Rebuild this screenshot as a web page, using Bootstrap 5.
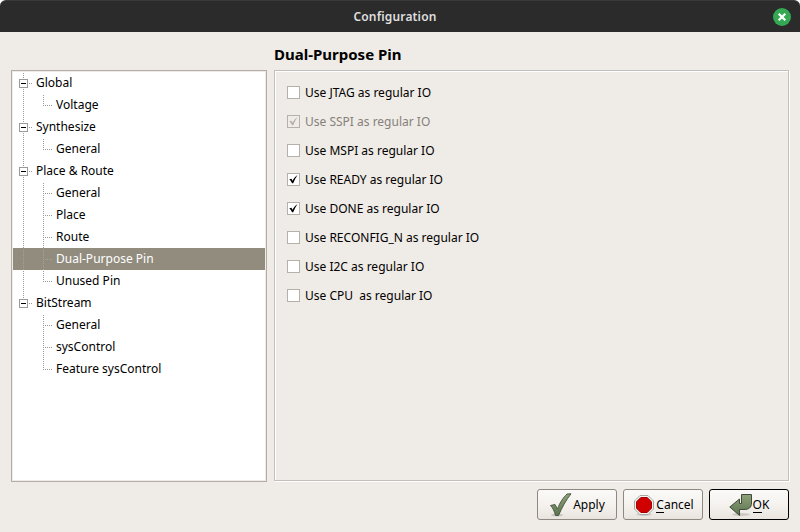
<!DOCTYPE html>
<html lang="en">
<head>
<meta charset="utf-8">
<title>Configuration</title>
<link href="https://cdn.jsdelivr.net/npm/bootstrap@5.3.0/dist/css/bootstrap.min.css" rel="stylesheet">
<style>
body{font:12px/22px "Noto Sans",sans-serif;color:#000;background:#fff}
.window{width:800px;height:532px;background:#efebe6}
.titlebar{height:32px;background:#2b2b2b;border-top:1px solid #3a3a3a;border-radius:6px 6px 0 0;color:#dfdfdf;padding-right:9px}
.titlewrap{background:#fff}
.titlebar .caption{padding-left:17px;font-weight:600;line-height:30px;letter-spacing:.15px}
.close-btn{width:18px;height:18px}
.content{height:500px;padding:0 11px 0 11px}
.tree{width:256px;height:412px;margin-top:38px;border:1px solid #b5ada5;background:#fff;box-shadow:inset 0 0 0 1px #efebe6;padding:1px}
.tree-row{height:22px}
.tree-row svg{width:43px;height:22px;flex:none}
.tree-row.root svg{width:23px}
.tree-row.selected{background:#918c7e;color:#fff}
.dots{stroke:#9a9a9a;stroke-dasharray:1 1;fill:none}
.selected .dots{stroke:#a5a196}
.page-title{height:38px;font-size:15px;font-weight:700;line-height:20px;padding-top:12px}
.pane{width:515px;height:411px;border:1px solid #c3bfbb;box-shadow:1px 1px 0 #fff,inset 1px 1px 0 #fff;padding:7px 0 0 12px}
.option{height:29px}
.tick{width:13px;height:13px;border:1px solid #b5b0aa;background:#fff;margin-right:5px}
.option.off{color:#85817c}
.option.off .tick{background:#efebe6}
.tick svg{display:block;width:11px;height:11px}
.buttons{gap:6px;height:31px;margin-top:7px}
.dlg-btn{width:80px;height:31px;border:1px solid #8e8883;border-radius:3px;background:linear-gradient(#fbfaf9,#f3f0ec 60%,#e9e4de);font-size:12px;line-height:29px;color:#000;padding:0}
.dlg-btn.primary{border-color:#000}
.dlg-btn svg{width:24px;height:24px;flex:none}
.key{border-bottom:1px solid #000;line-height:14px;display:inline-block}
</style>
<script src="https://cdn.jsdelivr.net/npm/bootstrap@5.3.0/dist/js/bootstrap.bundle.min.js"></script>
</head>
<body class="m-0 overflow-hidden">
<svg width="0" height="0" class="d-none">
<defs>
<g id="box"><rect x="6.5" y="7.5" width="8" height="8" fill="#fff" stroke="#9a9a9a"/><path d="M8 11.5h5" stroke="#000"/></g>
<path id="check" d="M1.3 5.2 3.4 4.8 4.6 6.7C5.8 4.2 7.3 2.4 9.5 1 8 3.4 6.5 6.2 5.2 9.2H4.1C3.3 7.5 2.4 6.2 1.3 5.2z"/>
</defs>
</svg>
<div class="window d-flex flex-column">
  <div class="titlewrap"><header class="titlebar d-flex align-items-center">
    <div class="caption flex-grow-1 text-center">Configuration</div>
    <svg class="close-btn" viewBox="0 0 18 18"><circle cx="9" cy="9" r="9" fill="#34a853"/><path d="M5.7 5.7 12.3 12.3M12.3 5.7 5.7 12.3" stroke="#fff" stroke-width="2.2"/></svg>
  </header></div>
  <main class="content">
    <div class="d-flex justify-content-between">
      <nav class="tree">
        <div class="tree-row root d-flex"><svg><path class="dots" d="M10.5 1v6M10.5 17v5M16 11.5h3"/><use href="#box"/></svg>Global</div>
        <div class="tree-row d-flex"><svg><path class="dots" d="M10.5 1v21M30.5 1v11M30 11.5h9"/></svg>Voltage</div>
        <div class="tree-row root d-flex"><svg><path class="dots" d="M10.5 1v6M10.5 17v5M16 11.5h3"/><use href="#box"/></svg>Synthesize</div>
        <div class="tree-row d-flex"><svg><path class="dots" d="M10.5 1v21M30.5 1v11M30 11.5h9"/></svg>General</div>
        <div class="tree-row root d-flex"><svg><path class="dots" d="M10.5 1v6M10.5 17v5M16 11.5h3"/><use href="#box"/></svg>Place &amp; Route</div>
        <div class="tree-row d-flex"><svg><path class="dots" d="M10.5 1v21M30.5 1v21M32 11.5h7"/></svg>General</div>
        <div class="tree-row d-flex"><svg><path class="dots" d="M10.5 1v21M30.5 1v21M32 11.5h7"/></svg>Place</div>
        <div class="tree-row d-flex"><svg><path class="dots" d="M10.5 1v21M30.5 1v21M32 11.5h7"/></svg>Route</div>
        <div class="tree-row selected d-flex"><svg><path class="dots" d="M10.5 1v21M30.5 1v21M32 11.5h7"/></svg>Dual-Purpose Pin</div>
        <div class="tree-row d-flex"><svg><path class="dots" d="M10.5 1v21M30.5 1v11M30 11.5h9"/></svg>Unused Pin</div>
        <div class="tree-row root d-flex"><svg><path class="dots" d="M10.5 1v6M16 11.5h3"/><use href="#box"/></svg>BitStream</div>
        <div class="tree-row d-flex"><svg><path class="dots" d="M30.5 1v21M32 11.5h7"/></svg>General</div>
        <div class="tree-row d-flex"><svg><path class="dots" d="M30.5 1v21M32 11.5h7"/></svg>sysControl</div>
        <div class="tree-row d-flex"><svg><path class="dots" d="M30.5 1v11M30 11.5h9"/></svg>Feature sysControl</div>
      </nav>
      <section class="me-0" style="">
        <h1 class="page-title m-0">Dual-Purpose Pin</h1>
        <div class="pane">
          <div class="option d-flex align-items-center"><span class="tick"></span>Use JTAG as regular IO</div>
          <div class="option off d-flex align-items-center"><span class="tick"><svg><use href="#check" fill="#b5b0aa"/></svg></span>Use SSPI as regular IO</div>
          <div class="option d-flex align-items-center"><span class="tick"></span>Use MSPI as regular IO</div>
          <div class="option d-flex align-items-center"><span class="tick"><svg><use href="#check"/></svg></span>Use READY as regular IO</div>
          <div class="option d-flex align-items-center"><span class="tick"><svg><use href="#check"/></svg></span>Use DONE as regular IO</div>
          <div class="option d-flex align-items-center"><span class="tick"></span>Use RECONFIG_N as regular IO</div>
          <div class="option d-flex align-items-center"><span class="tick"></span>Use I2C as regular IO</div>
          <div class="option d-flex align-items-center"><span class="tick"></span>Use CPU&nbsp; as regular IO</div>
        </div>
      </section>
    </div>
    <div class="buttons d-flex justify-content-end">
      <button class="btn dlg-btn d-flex align-items-center justify-content-center"><svg viewBox="0 0 24 24"><defs><linearGradient id="g" x2="0" y2="1"><stop stop-color="#8fa37a"/><stop offset="1" stop-color="#5c7350"/></linearGradient></defs><ellipse cx="8" cy="22" rx="6" ry="1.5" fill="#000" opacity=".15"/><path d="M1.5 12.5 6 11.5 8.5 16C11 9 14.500 4.500 18 1L22 .8C17 7 13 14.500 9.500 22.500L6.500 22.500C5.500 18.500 4 15 1.500 12.500z" fill="url(#g)" stroke="#4a5a43"/></svg><span>Apply</span></button>
      <button class="btn dlg-btn d-flex align-items-center justify-content-center"><svg viewBox="0 0 24 24"><ellipse cx="12" cy="21.500" rx="8" ry="1.500" opacity=".12"/><path d="M8 2.500h8L21.500 8v8L16 21.500H8L2.500 16V8z" fill="#f4f4f2" stroke="#a5a7a3"/><path d="M8.800 4.500h6.400L19.500 8.800v6.400L15.200 19.500H8.800L4.500 15.200V8.800z" fill="#d00000" stroke="#a80000"/></svg><span><span class="key">C</span>ancel</span></button>
      <button class="btn dlg-btn primary d-flex align-items-center justify-content-center"><svg viewBox="0 0 24 24"><ellipse cx="12" cy="21.500" rx="9" ry="1.500" opacity=".14"/><path d="M12.500 1.500H22.500V10C22.500 14.500 20 16.500 15 16.500H10.500V22.500L.8 14 10.500 6V10.500H12.500z" fill="url(#g)" stroke="#3f4a3a"/></svg><span><span class="key">O</span>K</span></button>
    </div>
  </main>
</div>
</body>
</html>
